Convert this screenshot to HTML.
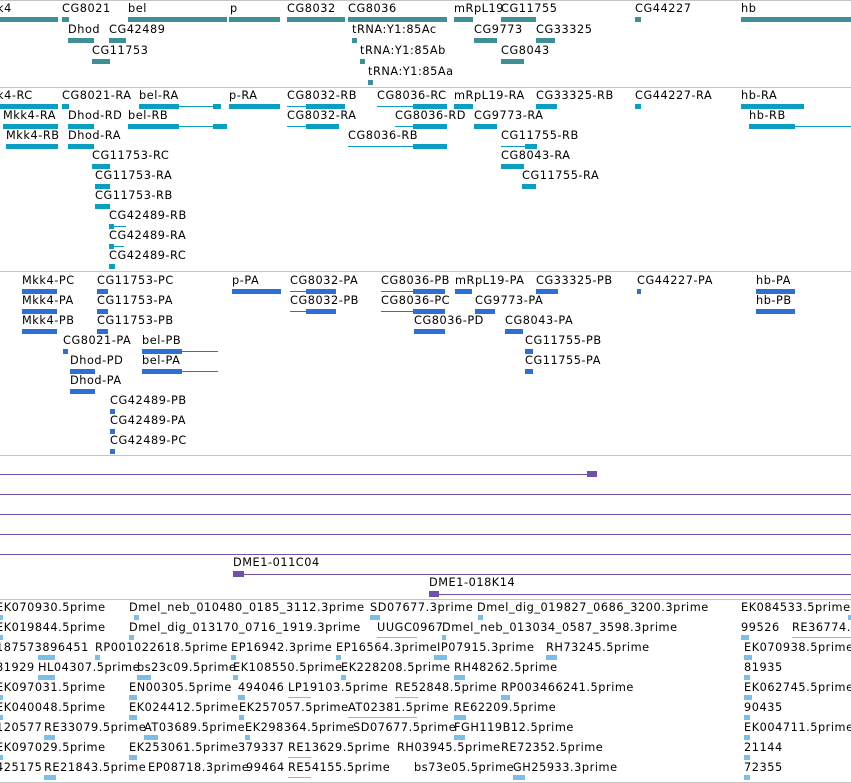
<!DOCTYPE html>
<html><head><meta charset="utf-8"><style>
body{margin:0;width:851px;height:783px;overflow:hidden;background:#fff;position:relative;font-family:"DejaVu Sans","Liberation Sans",sans-serif;font-size:11.3px;letter-spacing:0.55px;color:#000}
i{position:absolute;font-style:normal;white-space:nowrap;line-height:13px}
b{position:absolute;height:5px}
u{position:absolute;height:1px}
.a b{background:#3f8f96}.a u{background:#3f8f96}
.c b{background:#0a9fc2}.c u{background:#0a9fc2}
.d b{background:#2f6fd2}.d u{background:#2f6fd2}
.e b{background:#7dbde6}.e u{background:#7dbde6}
.p u{background:#6f52a8}
.s{position:absolute;left:0;width:851px;height:1px;background:#c4c4c4}
</style></head><body>
<div class="s" style="top:0"></div>
<div class="a">
<i style="left:-3px;top:2px">k4</i><b style="left:0;top:17px;width:58px"></b>
<i style="left:62px;top:2px">CG8021</i><b style="left:62px;top:17px;width:7px"></b>
<i style="left:128px;top:2px">bel</i><b style="left:128px;top:17px;width:99px"></b>
<i style="left:230px;top:2px">p</i><b style="left:229px;top:17px;width:51px"></b>
<i style="left:287px;top:2px">CG8032</i><b style="left:287px;top:17px;width:58px"></b>
<i style="left:348px;top:2px">CG8036</i><b style="left:348px;top:17px;width:99px"></b>
<i style="left:454px;top:2px">mRpL19</i><b style="left:454px;top:17px;width:19px"></b>
<i style="left:501px;top:2px">CG11755</i><b style="left:501px;top:17px;width:35px"></b>
<i style="left:635px;top:2px">CG44227</i><b style="left:635px;top:17px;width:6px"></b>
<i style="left:741px;top:2px">hb</i><b style="left:741px;top:17px;width:110px"></b>
<i style="left:68px;top:23px">Dhod</i><b style="left:68px;top:38px;width:26px"></b>
<i style="left:109px;top:23px">CG42489</i><b style="left:109px;top:38px;width:17px"></b>
<i style="left:352px;top:23px">tRNA:Y1:85Ac</i><b style="left:352px;top:38px;width:5px"></b>
<i style="left:474px;top:23px">CG9773</i><b style="left:474px;top:38px;width:23px"></b>
<i style="left:536px;top:23px">CG33325</i><b style="left:536px;top:38px;width:19px"></b>
<i style="left:92px;top:44px">CG11753</i><b style="left:92px;top:59px;width:18px"></b>
<i style="left:360px;top:44px">tRNA:Y1:85Ab</i><b style="left:360px;top:59px;width:5px"></b>
<i style="left:501px;top:44px">CG8043</i><b style="left:501px;top:59px;width:23px"></b>
<i style="left:368px;top:65px">tRNA:Y1:85Aa</i><b style="left:368px;top:80px;width:5px"></b>
</div>
<div class="s" style="top:87px"></div>
<div class="c">
<i style="left:-3px;top:89px">k4-RC</i><b style="left:0;top:104px;width:58px"></b>
<i style="left:62px;top:89px">CG8021-RA</i><b style="left:62px;top:104px;width:7px"></b>
<i style="left:139px;top:89px">bel-RA</i><b style="left:139px;top:104px;width:40px"></b><u style="left:179px;top:106px;width:42px"></u><b style="left:213px;top:104px;width:8px"></b>
<i style="left:229px;top:89px">p-RA</i><b style="left:229px;top:104px;width:51px"></b>
<i style="left:287px;top:89px">CG8032-RB</i><u style="left:287px;top:106px;width:58px"></u><b style="left:306px;top:104px;width:39px"></b>
<i style="left:377px;top:89px">CG8036-RC</i><u style="left:377px;top:106px;width:70px"></u><b style="left:413px;top:104px;width:34px"></b>
<i style="left:454px;top:89px">mRpL19-RA</i><b style="left:454px;top:104px;width:19px"></b>
<i style="left:536px;top:89px">CG33325-RB</i><b style="left:536px;top:104px;width:21px"></b>
<i style="left:635px;top:89px">CG44227-RA</i><b style="left:635px;top:104px;width:6px"></b>
<i style="left:741px;top:89px">hb-RA</i><b style="left:741px;top:104px;width:63px"></b>
<i style="left:3px;top:109px">Mkk4-RA</i><b style="left:3px;top:124px;width:55px"></b>
<i style="left:68px;top:109px">Dhod-RD</i><b style="left:68px;top:124px;width:26px"></b>
<i style="left:128px;top:109px">bel-RB</i><b style="left:128px;top:124px;width:51px"></b><u style="left:179px;top:126px;width:48px"></u><b style="left:213px;top:124px;width:14px"></b>
<i style="left:287px;top:109px">CG8032-RA</i><u style="left:287px;top:126px;width:52px"></u><b style="left:306px;top:124px;width:33px"></b>
<i style="left:395px;top:109px">CG8036-RD</i><u style="left:395px;top:126px;width:52px"></u><b style="left:413px;top:124px;width:34px"></b>
<i style="left:474px;top:109px">CG9773-RA</i><b style="left:474px;top:124px;width:23px"></b>
<i style="left:749px;top:109px">hb-RB</i><b style="left:749px;top:124px;width:46px"></b><u style="left:795px;top:126px;width:56px"></u>
<i style="left:6px;top:129px">Mkk4-RB</i><b style="left:6px;top:144px;width:52px"></b>
<i style="left:68px;top:129px">Dhod-RA</i><b style="left:68px;top:144px;width:26px"></b>
<i style="left:348px;top:129px">CG8036-RB</i><u style="left:348px;top:146px;width:99px"></u><b style="left:413px;top:144px;width:34px"></b>
<i style="left:501px;top:129px">CG11755-RB</i><u style="left:501px;top:146px;width:36px"></u><b style="left:525px;top:144px;width:12px"></b>
<i style="left:92px;top:149px">CG11753-RC</i><b style="left:92px;top:164px;width:18px"></b>
<i style="left:501px;top:149px">CG8043-RA</i><b style="left:501px;top:164px;width:23px"></b>
<i style="left:95px;top:169px">CG11753-RA</i><b style="left:95px;top:184px;width:15px"></b>
<i style="left:522px;top:169px">CG11755-RA</i><b style="left:522px;top:184px;width:14px"></b>
<i style="left:95px;top:189px">CG11753-RB</i><b style="left:95px;top:204px;width:15px"></b>
<i style="left:109px;top:209px">CG42489-RB</i><u style="left:109px;top:226px;width:17px"></u><b style="left:109px;top:224px;width:5px"></b>
<i style="left:109px;top:229px">CG42489-RA</i><u style="left:109px;top:246px;width:15px"></u><b style="left:109px;top:244px;width:5px"></b>
<i style="left:109px;top:249px">CG42489-RC</i><b style="left:109px;top:264px;width:6px"></b>
</div>
<div class="s" style="top:271px"></div>
<div class="d">
<i style="left:22px;top:274px">Mkk4-PC</i><b style="left:22px;top:289px;width:35px"></b>
<i style="left:97px;top:274px">CG11753-PC</i><b style="left:97px;top:289px;width:11px"></b>
<i style="left:232px;top:274px">p-PA</i><b style="left:232px;top:289px;width:49px"></b>
<i style="left:290px;top:274px">CG8032-PA</i><u style="left:290px;top:291px;width:46px"></u><b style="left:306px;top:289px;width:30px"></b>
<i style="left:381px;top:274px">CG8036-PB</i><u style="left:381px;top:291px;width:64px"></u><b style="left:413px;top:289px;width:32px"></b>
<i style="left:455px;top:274px">mRpL19-PA</i><b style="left:455px;top:289px;width:17px"></b>
<i style="left:536px;top:274px">CG33325-PB</i><b style="left:536px;top:289px;width:22px"></b>
<i style="left:637px;top:274px">CG44227-PA</i><b style="left:637px;top:289px;width:4px"></b>
<i style="left:756px;top:274px">hb-PA</i><b style="left:756px;top:289px;width:39px"></b>
<i style="left:22px;top:294px">Mkk4-PA</i><b style="left:22px;top:309px;width:35px"></b>
<i style="left:97px;top:294px">CG11753-PA</i><b style="left:97px;top:309px;width:11px"></b>
<i style="left:290px;top:294px">CG8032-PB</i><u style="left:290px;top:311px;width:46px"></u><b style="left:306px;top:309px;width:30px"></b>
<i style="left:381px;top:294px">CG8036-PC</i><u style="left:381px;top:311px;width:64px"></u><b style="left:413px;top:309px;width:32px"></b>
<i style="left:475px;top:294px">CG9773-PA</i><b style="left:475px;top:309px;width:20px"></b>
<i style="left:756px;top:294px">hb-PB</i><b style="left:756px;top:309px;width:39px"></b>
<i style="left:22px;top:314px">Mkk4-PB</i><b style="left:22px;top:329px;width:35px"></b>
<i style="left:97px;top:314px">CG11753-PB</i><b style="left:97px;top:329px;width:11px"></b>
<i style="left:414px;top:314px">CG8036-PD</i><b style="left:414px;top:329px;width:31px"></b>
<i style="left:505px;top:314px">CG8043-PA</i><b style="left:505px;top:329px;width:18px"></b>
<i style="left:63px;top:334px">CG8021-PA</i><b style="left:63px;top:349px;width:5px"></b>
<i style="left:142px;top:334px">bel-PB</i><b style="left:142px;top:349px;width:40px"></b><u style="left:182px;top:351px;width:36px"></u>
<i style="left:525px;top:334px">CG11755-PB</i><b style="left:525px;top:349px;width:8px"></b>
<i style="left:70px;top:354px">Dhod-PD</i><b style="left:70px;top:369px;width:25px"></b>
<i style="left:142px;top:354px">bel-PA</i><b style="left:142px;top:369px;width:40px"></b><u style="left:182px;top:371px;width:36px"></u>
<i style="left:525px;top:354px">CG11755-PA</i><b style="left:525px;top:369px;width:8px"></b>
<i style="left:70px;top:374px">Dhod-PA</i><b style="left:70px;top:389px;width:25px"></b>
<i style="left:110px;top:394px">CG42489-PB</i><b style="left:110px;top:409px;width:5px"></b>
<i style="left:110px;top:414px">CG42489-PA</i><b style="left:110px;top:429px;width:5px"></b>
<i style="left:110px;top:434px">CG42489-PC</i><b style="left:110px;top:449px;width:5px"></b>
</div>
<div class="s" style="top:455px"></div>
<div class="p">
<u style="left:0;top:474px;width:597px"></u><u style="left:587px;top:471px;width:10px;height:6px"></u>
<u style="left:0;top:494px;width:851px"></u>
<u style="left:0;top:514px;width:851px"></u>
<u style="left:0;top:534px;width:851px"></u>
<u style="left:0;top:554px;width:851px"></u>
<i style="left:233px;top:556px">DME1-011C04</i>
<u style="left:233px;top:574px;width:618px"></u><u style="left:233px;top:571px;width:11px;height:6px"></u>
<i style="left:429px;top:576px">DME1-018K14</i>
<u style="left:429px;top:594px;width:422px"></u><u style="left:429px;top:591px;width:10px;height:6px"></u>
</div>
<div class="s" style="top:599px"></div>
<div class="e">
<i style="left:-4px;top:601px">EK070930.5prime</i><b style="left:0;top:615px;width:3px"></b>
<i style="left:129px;top:601px">Dmel_neb_010480_0185_3112.3prime</i><b style="left:134px;top:615px;width:5px"></b>
<i style="left:370px;top:601px">SD07677.3prime</i><b style="left:370px;top:615px;width:10px"></b>
<i style="left:477px;top:601px">Dmel_dig_019827_0686_3200.3prime</i><b style="left:478px;top:615px;width:5px"></b>
<i style="left:741px;top:601px">EK084533.5prime</i><b style="left:848px;top:615px;width:3px"></b>
<i style="left:-4px;top:621px">EK019844.5prime</i><b style="left:0;top:635px;width:3px"></b>
<i style="left:129px;top:621px">Dmel_dig_013170_0716_1919.3prime</i><b style="left:129px;top:635px;width:5px"></b>
<i style="left:377px;top:621px">UUGC0967</i><u style="left:377px;top:637px;width:40px"></u>
<i style="left:442px;top:621px">Dmel_neb_013034_0587_3598.3prime</i><b style="left:442px;top:635px;width:4px"></b>
<i style="left:741px;top:621px">99526</i><b style="left:741px;top:635px;width:8px"></b>
<i style="left:792px;top:621px">RE36774.</i><u style="left:792px;top:637px;width:59px"></u>
<i style="left:-4px;top:641px">187573896451</i><b style="left:38px;top:655px;width:17px"></b>
<i style="left:95px;top:641px">RP001022618.5prime</i><b style="left:95px;top:655px;width:5px"></b>
<i style="left:231px;top:641px">EP16942.3prime</i><b style="left:231px;top:655px;width:5px"></b>
<i style="left:336px;top:641px">EP16564.3prime</i><b style="left:336px;top:655px;width:5px"></b>
<i style="left:437px;top:641px">IP07915.3prime</i><b style="left:434px;top:655px;width:13px"></b>
<i style="left:546px;top:641px">RH73245.5prime</i><b style="left:546px;top:655px;width:11px"></b>
<i style="left:744px;top:641px">EK070938.5prime</i><b style="left:744px;top:655px;width:8px"></b>
<i style="left:-4px;top:661px">81929</i>
<i style="left:38px;top:661px">HL04307.5prime</i><b style="left:38px;top:675px;width:17px"></b>
<i style="left:137px;top:661px">bs23c09.5prime</i><b style="left:137px;top:675px;width:14px"></b>
<i style="left:233px;top:661px">EK108550.5prime</i><b style="left:233px;top:675px;width:5px"></b>
<i style="left:341px;top:661px">EK228208.5prime</i><b style="left:341px;top:675px;width:5px"></b>
<i style="left:454px;top:661px">RH48262.5prime</i><b style="left:454px;top:675px;width:11px"></b>
<i style="left:744px;top:661px">81935</i><b style="left:744px;top:675px;width:6px"></b>
<i style="left:-4px;top:681px">EK097031.5prime</i><b style="left:0;top:695px;width:3px"></b>
<i style="left:129px;top:681px">EN00305.5prime</i><b style="left:129px;top:695px;width:8px"></b>
<i style="left:238px;top:681px">494046</i><b style="left:238px;top:695px;width:7px"></b>
<i style="left:288px;top:681px">LP19103.5prime</i><u style="left:288px;top:697px;width:23px"></u>
<i style="left:395px;top:681px">RE52848.5prime</i><u style="left:395px;top:697px;width:23px"></u>
<i style="left:501px;top:681px">RP003466241.5prime</i><b style="left:501px;top:695px;width:9px"></b>
<i style="left:744px;top:681px">EK062745.5prime</i><b style="left:744px;top:695px;width:8px"></b>
<i style="left:-4px;top:701px">EK040048.5prime</i><b style="left:0;top:715px;width:3px"></b>
<i style="left:129px;top:701px">EK024412.5prime</i><b style="left:129px;top:715px;width:8px"></b>
<i style="left:239px;top:701px">EK257057.5prime</i><b style="left:239px;top:715px;width:5px"></b>
<i style="left:348px;top:701px">AT02381.5prime</i><u style="left:348px;top:717px;width:69px"></u>
<i style="left:454px;top:701px">RE62209.5prime</i><b style="left:454px;top:715px;width:12px"></b>
<i style="left:744px;top:701px">90435</i><b style="left:744px;top:715px;width:6px"></b>
<i style="left:-4px;top:721px">120577</i>
<i style="left:44px;top:721px">RE33079.5prime</i><b style="left:44px;top:735px;width:11px"></b>
<i style="left:144px;top:721px">AT03689.5prime</i><b style="left:144px;top:735px;width:14px"></b>
<i style="left:245px;top:721px">EK298364.5prime</i><b style="left:245px;top:735px;width:5px"></b>
<i style="left:353px;top:721px">SD07677.5prime</i>
<i style="left:454px;top:721px">FGH119B12.5prime</i><b style="left:454px;top:735px;width:11px"></b>
<i style="left:744px;top:721px">EK004711.5prime</i><b style="left:744px;top:735px;width:6px"></b>
<i style="left:-4px;top:741px">EK097029.5prime</i><b style="left:0;top:755px;width:3px"></b>
<i style="left:129px;top:741px">EK253061.5prime</i><b style="left:129px;top:755px;width:8px"></b>
<i style="left:238px;top:741px">379337</i>
<i style="left:288px;top:741px">RE13629.5prime</i><u style="left:288px;top:757px;width:23px"></u>
<i style="left:397px;top:741px">RH03945.5prime</i>
<i style="left:501px;top:741px">RE72352.5prime</i>
<i style="left:744px;top:741px">21144</i><b style="left:744px;top:755px;width:6px"></b>
<i style="left:-4px;top:761px">425175</i>
<i style="left:44px;top:761px">RE21843.5prime</i><b style="left:44px;top:775px;width:12px"></b>
<i style="left:148px;top:761px">EP08718.3prime</i>
<i style="left:246px;top:761px">99464</i>
<i style="left:288px;top:761px">RE54155.5prime</i><u style="left:288px;top:777px;width:23px"></u>
<i style="left:414px;top:761px">bs73e05.5prime</i>
<i style="left:513px;top:761px">GH25933.3prime</i><b style="left:513px;top:775px;width:12px"></b>
<i style="left:744px;top:761px">72355</i><b style="left:744px;top:775px;width:6px"></b>
</div>
<div class="s" style="top:782px"></div>
</body></html>
